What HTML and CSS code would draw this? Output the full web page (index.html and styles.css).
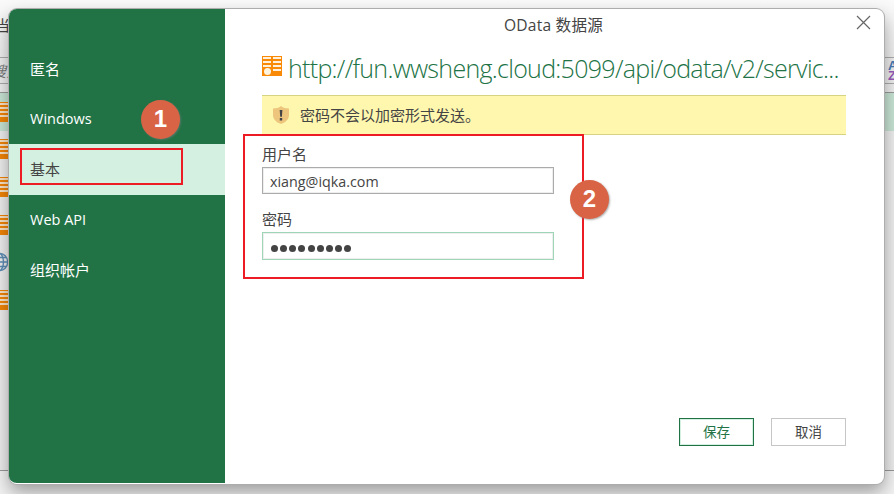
FILE: index.html
```
<!DOCTYPE html>
<html lang="zh-CN">
<head>
<meta charset="utf-8">
<title>OData 数据源</title>
<link rel="stylesheet" href="styles.css">
</head>
<body>
<svg class="defs" width="0" height="0" aria-hidden="true">
  <symbol id="table" viewBox="0 0 20 20">
    <path fill="#f98a08" d="M0 0h20v20H0z"/>
    <path stroke="#fff0dc" stroke-width="2" d="M1 2h8M1 6h8M1 10h8M11 2h8M11 6h8M11 10h8M11 14h8"/>
    <circle cx="5.500" cy="15.500" r="3.500" fill="#fff4df"/>
  </symbol>
  <symbol id="rows" viewBox="0 0 9 20">
    <path fill="#f18408" d="M0 0h9v20H0z"/>
    <path stroke="#fae2c5" stroke-width="2" d="M0 2h8M0 6h8M0 10h8M0 14h8"/>
  </symbol>
</svg>
<div class="backdrop">
  <div class="back-title">当</div>
  <div class="back-search"><span>搜索</span><div class="sort"><b>A</b><b class="z">Z</b></div></div>
  <div class="back-list">
    <div class="back-row current"><svg><use href="#rows"/></svg></div>
    <div class="back-row"><svg><use href="#rows"/></svg></div>
    <div class="back-row"><svg><use href="#rows"/></svg></div>
    <div class="back-row"><svg><use href="#rows"/></svg></div>
    <div class="back-row"><svg viewBox="0 0 9 20"><g fill="none" stroke="#5c8bb5" stroke-width="1.400"><circle cx="-1" cy="10" r="8.700"/><ellipse cx="-1" cy="10" rx="4.500" ry="8.700"/><path d="M-9 10H8M-8 5.500H6M-8 14.500H6"/></g></svg></div>
    <div class="back-row"><svg><use href="#rows"/></svg></div>
  </div>
</div>
<div class="dialog">
  <nav class="sidebar">
    <div class="tab">匿名</div>
    <div class="tab latin">Windows</div>
    <div class="tab selected">基本</div>
    <div class="tab latin">Web API</div>
    <div class="tab">组织帐户</div>
  </nav>
  <main class="content">
    <div class="source">
      <svg width="20" height="20"><use href="#table"/></svg>
      <div class="url">http://fun.wwsheng.cloud:5099/api/odata/v2/servic...</div>
    </div>
    <div class="warning">
      <svg width="16" height="18" viewBox="0 0 16 18"><path fill="#edc57d" d="M8 0C6 1.800 3 2.500 0 2.500V9c0 4 3 7.300 8 9 5-1.700 8-5 8-9V2.500C13 2.500 10 1.800 8 0z"/><path fill="#454545" d="M6.700 4h2.700l-.5 6.700H7.200zM6.800 12h2.400v2.500H6.800z"/></svg>
      <span>密码不会以加密形式发送。</span>
    </div>
    <div class="label">用户名</div>
    <div class="field">xiang@iqka.com</div>
    <div class="label second">密码</div>
    <div class="field focused"><i></i><i></i><i></i><i></i><i></i><i></i><i></i><i></i><i></i></div>
    <div class="actions">
      <div class="button primary">保存</div>
      <div class="button">取消</div>
    </div>
  </main>
</div>
<div class="caption">OData 数据源</div>
<svg class="close" width="15" height="15" viewBox="0 0 15 15"><path d="M1 1l13 13M14 1L1 14" stroke="#666" stroke-width="1.200"/></svg>
<div class="mark mark-tab"></div>
<div class="mark mark-form"></div>
<div class="step step-one">1</div>
<div class="step step-two">2</div>
</body>
</html>
```
FILE: styles.css
```
* { box-sizing: border-box; }
body {
  margin: 0;
  width: 894px;
  height: 494px;
  overflow: hidden;
  position: relative;
  background: #f2f2f2;
  color: #444;
  font: 15px/20px "Open Sans", "Noto Sans CJK SC", sans-serif;
}
.defs { position: absolute; }
.backdrop { height: 471px; border-bottom: 1px solid #999; background: linear-gradient(#fafafa, #ededed 60px); }
.back-title { height: 57px; padding-top: 15px; margin-left: -5px; font-size: 15px; }
.back-search {
  height: 27px;
  border-top: 1px solid #aaa;
  border-bottom: 1px solid #aaa;
  display: flex;
  justify-content: space-between;
  align-items: center;
  font-size: 15px;
  font-style: italic;
  color: #777;
}
.back-search span { margin-left: -9px; }
.sort { width: 6px; font: bold 13px/10px "Liberation Sans", sans-serif; color: #4779b4; }
.sort b { display: block; }
.sort .z { color: #955bb9; }
.back-list { margin-top: 8px; border-top: 1px solid #999; }
.back-row { height: 37.600px; display: flex; align-items: center; }
.back-row svg { width: 9px; height: 20px; }
.current { background: #c7e3d3; }
.dialog {
  position: absolute;
  left: 9px;
  top: 9px;
  width: 875px;
  height: 475px;
  display: flex;
  overflow: hidden;
  background: #fff;
  border-radius: 8px;
  border-bottom: 1px solid #fff;
  box-shadow: 0 0 0 1px #adadad, 0 8px 18px rgba(0, 0, 0, .36);
}
.sidebar { flex: none; width: 216px; padding-top: 35px; background: #217346; color: #fff; }
.tab { height: 50.200px; padding: 15px 21px; }
.tab.latin { font-size: 14.500px; }
.tab.selected { background: #d3f0e0; color: #444; }
.content { flex: 1; min-width: 0; padding: 46px 38px 0 37px; }
.source { display: flex; height: 40px; gap: 6px; color: #217346; }
.source > svg { flex: none; margin-top: 1px; }
.url { margin-top: -1px; font-size: 25px; line-height: 28px; font-weight: 300; letter-spacing: -.7px; white-space: nowrap; }
.warning {
  height: 40px;
  padding-left: 11px;
  display: flex;
  align-items: center;
  gap: 11px;
  background: #fff7ad;
  border-top: 1px solid #d6d382;
  border-bottom: 1px solid #d6d382;
}
.label { margin-top: 9px; height: 23px; }
.label.second { margin-top: 15px; }
.field {
  width: 292px;
  height: 27px;
  padding: 2px 0 0 7px;
  display: flex;
  align-items: center;
  border: 1px solid #ababab;
  box-shadow: inset 0 0 0 1px #eee;
  font-size: 14.300px;
}
.field.focused { height: 28px; gap: 2.150px; padding: 4px 0 0 8px; border-color: #9fd5b7; }
.field i { width: 7px; height: 7px; border-radius: 50%; background: #444; }
.actions { display: flex; justify-content: flex-end; gap: 17px; margin-top: 158px; }
.button {
  width: 75px;
  height: 28px;
  border: 1px solid #c6c6c6;
  font-size: 13.500px;
  line-height: 26px;
  text-align: center;
}
.primary { border-color: #217346; color: #217346; box-shadow: inset 0 0 0 1px #d3f0e0; }
.caption { position: absolute; left: 504px; top: 15px; font-size: 15.600px; letter-spacing: .2px; white-space: nowrap; }
.close { position: absolute; left: 856px; top: 15px; }
.mark { position: absolute; border: 2px solid #ed1c24; }
.mark-tab { left: 20px; top: 148px; width: 163px; height: 37px; }
.mark-form { left: 243px; top: 134px; width: 341px; height: 145px; }
.step {
  position: absolute;
  width: 39px;
  height: 39px;
  border-radius: 50%;
  background: #d96345;
  box-shadow: 1px 1px 2px rgba(120, 120, 120, .6);
  color: #fff;
  font: bold 24px/38px "Liberation Sans", sans-serif;
  text-align: center;
}
.step-one { left: 141px; top: 100px; }
.step-two { left: 570px; top: 180px; }
```
